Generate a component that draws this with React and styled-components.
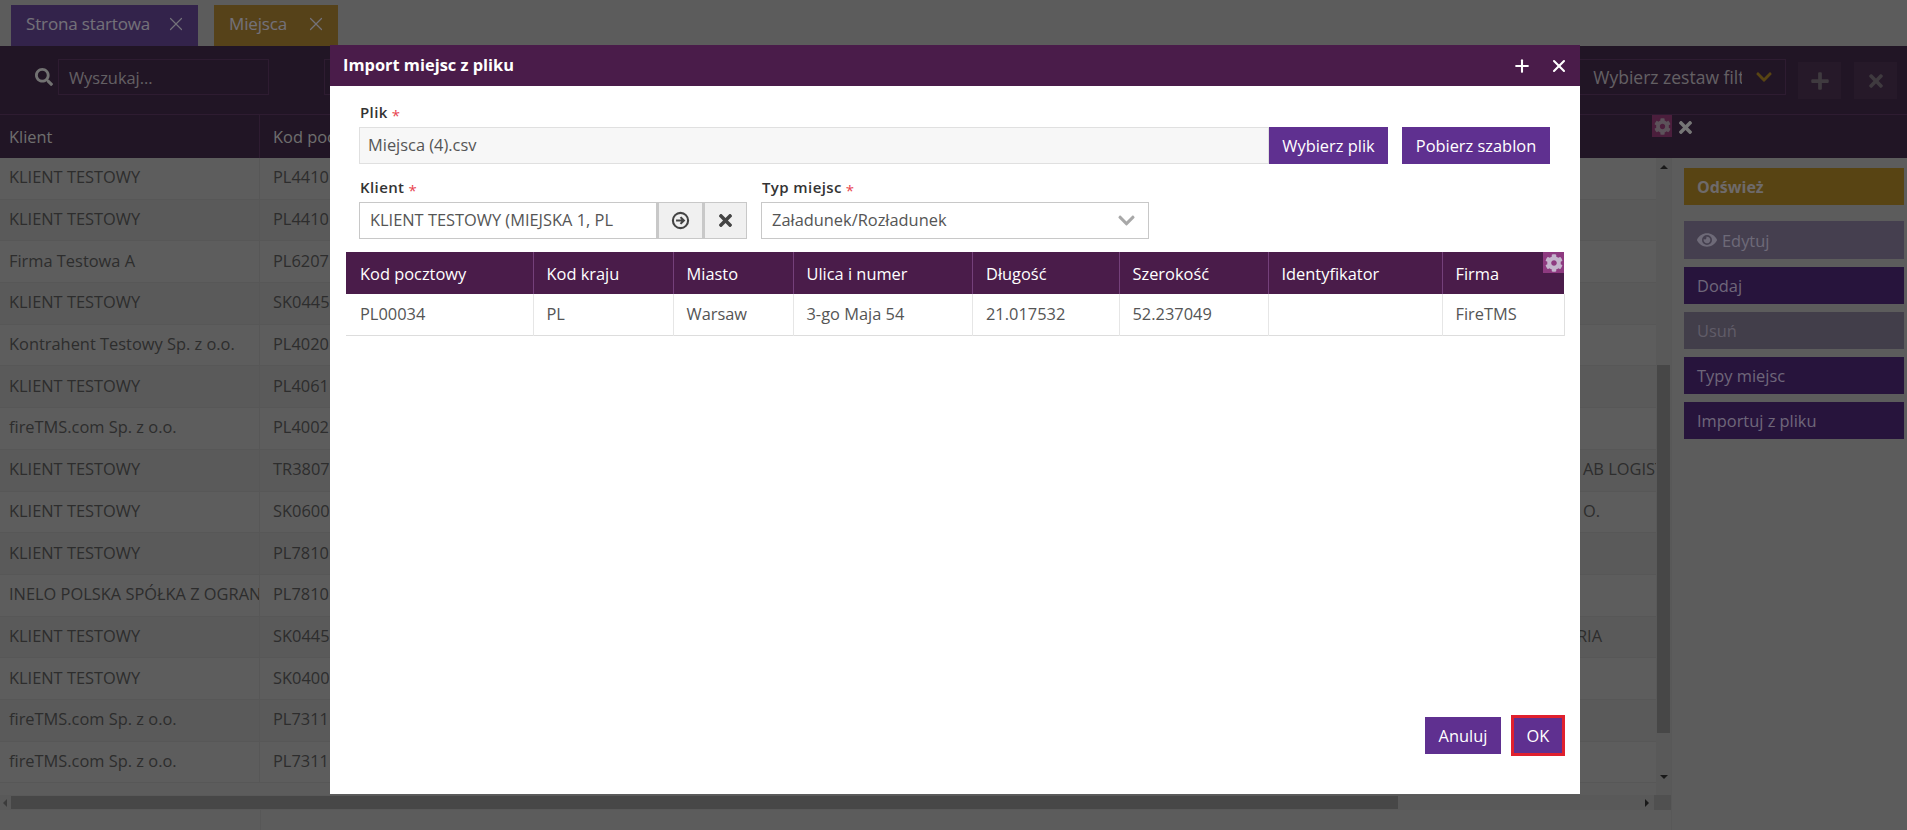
import React from 'react';
import styled, { createGlobalStyle } from 'styled-components';
import { FaSearch, FaTimes, FaPlus, FaCog, FaEye, FaChevronDown } from 'react-icons/fa';
import { X, Plus } from 'lucide-react';

const colors = {
  plum: '#4a1c4a',
  purple: '#5f3090',
  red: '#e0202e',
  line: '#c8c8c8',
};

const GlobalStyle = createGlobalStyle`
  html, body {
    margin: 0;
    padding: 0;
    background: #bcbcbc;
  }
  * {
    box-sizing: border-box;
  }
  body {
    font-family: "Open Sans", "Noto Sans", sans-serif;
    font-size: 16.4px;
  }
`;

// Page behind the dialog

const Page = styled.div`
  position: relative;
  width: 1907px;
  height: 830px;
  overflow: hidden;
  display: flex;
  flex-direction: column;
  background: #b8b8b8;
`;

const TabBar = styled.div`
  display: flex;
  gap: 16px;
  height: 46px;
  padding: 5px 0 0 11px;
`;

const Tab = styled.div`
  display: flex;
  align-items: center;
  justify-content: space-between;
  width: ${p => p.$width}px;
  padding: 0 11px 4px 15px;
  background: ${p => p.$bg};
  color: #e6e2f2;
  font-size: 17px;
  letter-spacing: -0.15px;

  svg {
    width: 22px;
    height: 22px;
    stroke-width: 1.3;
  }
`;

const Toolbar = styled.div`
  display: flex;
  align-items: flex-start;
  height: 69px;
  padding: 13px 10px 0 35px;
  background: #432a4a;
  border-bottom: 1px solid #5c3862;
`;

const SearchIcon = styled(FaSearch)`
  width: 18px;
  height: 18px;
  margin: 9px 5px 0 0;
  color: #e4e4e4;
`;

const ToolbarInput = styled.div`
  display: flex;
  align-items: center;
  justify-content: space-between;
  width: ${p => p.$width}px;
  height: 36px;
  margin-left: ${p => p.$before || 0}px;
  margin-right: ${p => p.$gap || 0}px;
  padding: 0 12px 0 10px;
  border: 1px solid #5c3862;
  color: #c8c0c8;
  overflow: hidden;
  white-space: nowrap;
`;

const FilterSelect = styled(ToolbarInput)`
  padding-left: 13px;

  svg {
    flex: none;
    width: 18px;
    height: 18px;
    margin-left: 13px;
    color: #b08826;
  }
`;

const FilterText = styled.span`
  flex: 1;
  overflow: hidden;
  font-size: 17.5px;
`;

const ToolButton = styled.div`
  display: flex;
  align-items: center;
  justify-content: center;
  width: 43px;
  height: 37px;
  margin-top: 3px;
  margin-left: ${p => p.$gap}px;
  background: #4c3252;
  color: #7e747e;
  font-size: 20px;
`;

const TableHead = styled.div`
  display: flex;
  height: 43px;
  background: #432a4a;
  color: #dcdcdc;
`;

const HeadCell = styled.div`
  width: ${p => p.$width}px;
  padding: 10px 0 0 ${p => p.$pad}px;
  border-right: 1px solid #5c3862;
`;

const HeadTools = styled.div`
  display: flex;
  align-items: flex-start;
  margin-left: 1132px;
`;

const HeadGear = styled.div`
  display: flex;
  align-items: center;
  justify-content: center;
  width: 20px;
  height: 22px;
  background: #963c78;
  color: #b8a4b4;
  font-size: 17px;
`;

const HeadClose = styled(FaTimes)`
  width: 17px;
  height: 19px;
  margin: 3px 0 0 5px;
  color: #ececec;
`;

const Content = styled.div`
  flex: 1;
  display: flex;
  min-height: 0;
`;

const ListArea = styled.div`
  width: 1672px;
  display: flex;
  flex-direction: column;
  border-right: 1px solid #b0b0b0;
`;

const ListScroll = styled.div`
  height: 637px;
  display: flex;
`;

const Rows = styled.div`
  flex: 1;
  overflow: hidden;
`;

const Row = styled.div`
  display: grid;
  grid-template-columns: 260px 1300px 97px;
  align-items: center;
  height: 41.7px;
  background: ${p => (p.$odd ? '#b5b5b5' : '#bbbbbb')};
  border-bottom: 1px solid #aeaeae;
  color: #5a5a5a;
`;

const Cell = styled.div`
  height: 100%;
  display: flex;
  align-items: center;
  padding: 0 0 3px ${p => p.$pad}px;
  border-right: 1px solid #aeaeae;
  overflow: hidden;
  white-space: nowrap;
`;

const LastCell = styled(Cell)`
  border-right: 0;
  padding-left: ${p => p.$pad || 0}px;
`;

const VScroll = styled.div`
  width: 15px;
  display: flex;
  flex-direction: column;
  align-items: center;
  background: #b2b2b2;
`;

const Arrow = styled.div`
  width: 0;
  height: 0;
  margin: ${p => p.$margin};
  border-left: 4px solid transparent;
  border-right: 4px solid transparent;
  border-${p => (p.$up ? 'bottom' : 'top')}: 4px solid #333;
`;

const VThumb = styled.div`
  width: 13px;
  height: 368px;
  margin-top: 196px;
  background: #8e8e8e;
`;

const HScroll = styled.div`
  display: flex;
  align-items: center;
  height: 15px;
  background: #b2b2b2;
`;

const HArrow = styled.div`
  width: 0;
  height: 0;
  margin: ${p => p.$margin};
  border-top: 4px solid transparent;
  border-bottom: 4px solid transparent;
  border-${p => (p.$left ? 'right' : 'left')}: 4px solid ${p => (p.$left ? '#777' : '#333')};
`;

const HThumb = styled.div`
  width: 1387px;
  height: 13px;
  background: #8e8e8e;
`;

const HCorner = styled.div`
  width: 17px;
  height: 15px;
  margin-left: auto;
  background: #a0a0a0;
`;

const ListFooter = styled.div`
  flex: 1;
  width: 261px;
  border-right: 1px solid #aeaeae;
`;

const SidePanel = styled.div`
  flex: 1;
  display: flex;
  flex-direction: column;
  gap: 8px;
  padding: 10px 3px 0 12px;
`;

const SideButton = styled.div`
  display: flex;
  align-items: center;
  gap: 5px;
  height: ${p => p.$height || 37}px;
  margin-bottom: ${p => p.$after || 0}px;
  padding-left: 13px;
  background: ${p => p.$bg};
  color: ${p => p.$color};
  font-weight: ${p => (p.$bold ? 700 : 400)};
  font-size: ${p => (p.$bold ? 16 : 16.4)}px;

  svg {
    width: 20px;
    height: 20px;
  }
`;

const Backdrop = styled.div`
  position: absolute;
  inset: 0;
  background: rgba(0, 0, 0, 0.5);
`;

// Dialog

const Dialog = styled.div`
  position: absolute;
  left: 330px;
  top: 45px;
  width: 1250px;
  height: 749px;
  display: flex;
  flex-direction: column;
  background: #fff;
`;

const DialogHeader = styled.div`
  display: flex;
  align-items: center;
  height: 41px;
  padding: 0 11px 0 13px;
  background: ${colors.plum};
  color: #fff;
  font-weight: 700;
  font-size: 16.4px;
`;

const DialogTitle = styled.div`
  flex: 1;
  padding-bottom: 2px;
`;

const HeaderIcon = styled.div`
  display: flex;
  margin-left: 17px;

  svg {
    width: 20px;
    height: 20px;
    stroke-width: 2.5;
  }
`;

const DialogBody = styled.div`
  flex: 1;
  display: flex;
  flex-direction: column;
  padding: 18px 16px 38px;
`;

const FormRow = styled.div`
  display: flex;
  align-items: flex-end;
  gap: 14px;
  padding: 0 14px 0 13px;
  margin-bottom: ${p => p.$after}px;
`;

const Field = styled.div`
  width: ${p => (p.$width ? `${p.$width}px` : 'auto')};
  flex: ${p => (p.$width ? 'none' : 1)};
`;

const Label = styled.div`
  height: 23px;
  padding-left: 1px;
  color: #333;
  font-weight: 600;
  font-size: 15px;
  letter-spacing: 0.4px;
  line-height: 17px;
`;

const Required = styled.span`
  margin-left: 4px;
  color: #e8434f;
  font-weight: 400;
  font-size: 15px;
  vertical-align: -3px;
`;

const InputGroup = styled.div`
  display: flex;
  height: 37px;
`;

const TextBox = styled.div`
  flex: 1;
  display: flex;
  align-items: center;
  padding: 0 8px 2px ${p => p.$pad}px;
  background: ${p => (p.$readOnly ? '#f7f7f7' : '#fff')};
  border: 1px solid ${p => (p.$readOnly ? '#e0e0e0' : colors.line)};
  color: #555;
  white-space: nowrap;
  overflow: hidden;
`;

const AddonButton = styled.div`
  display: flex;
  align-items: center;
  justify-content: center;
  width: ${p => p.$width}px;
  background: #f0f0f0;
  border: 1px solid ${colors.line};
  border-left: 2px solid ${colors.line};
  color: #444;

  > svg {
    width: 19px;
    height: 19px;
  }
`;

const SelectBox = styled(TextBox)`
  justify-content: space-between;
  height: 37px;
  padding-right: 12px;

  svg {
    color: #a8a8a8;
    width: 19px;
    height: 19px;
    margin-top: 2px;
  }
`;

const Button = styled.div`
  display: flex;
  align-items: center;
  justify-content: center;
  width: ${p => p.$width}px;
  height: 37px;
  background: ${colors.purple};
  color: #fff;
`;

const OkButton = styled(Button)`
  height: 41px;
  border: 3px solid ${colors.red};
`;

const GridWrap = styled.div`
  position: relative;
`;

const Table = styled.table`
  width: 1218px;
  table-layout: fixed;
  border-collapse: collapse;
  border-bottom: 1px solid #ddd;

  th {
    height: 42px;
    padding: 0 0 0 13px;
    background: ${colors.plum};
    border-right: 1px solid #74407a;
    color: #fff;
    font-weight: 400;
    text-align: left;
  }

  th:first-child, td:first-child {
    padding-left: 14px;
  }

  th:last-child {
    border-right: 0;
  }

  td {
    height: 41px;
    padding: 0 0 2px 13px;
    border-right: 1px solid #e6e6e6;
    color: #555;
  }

  td:last-child {
    border-right: 1px solid #e0e0e0;
  }
`;

const GearBadge = styled.div`
  position: absolute;
  top: 0;
  right: 0;
  width: 21px;
  height: 21px;
  display: flex;
  align-items: center;
  justify-content: center;
  background: #8e3a80;
  color: #c4b4cc;
  font-size: 18px;
`;

const DialogFooter = styled.div`
  margin: auto -1px 0 0;
  display: flex;
  justify-content: flex-end;
  align-items: center;
  gap: 10px;
`;

const rows = [
  ['KLIENT TESTOWY', 'PL4410'],
  ['KLIENT TESTOWY', 'PL4410'],
  ['Firma Testowa A', 'PL6207'],
  ['KLIENT TESTOWY', 'SK0445'],
  ['Kontrahent Testowy Sp. z o.o.', 'PL4020'],
  ['KLIENT TESTOWY', 'PL4061'],
  ['fireTMS.com Sp. z o.o.', 'PL4002'],
  ['KLIENT TESTOWY', 'TR3807', 'AB LOGISTICS', 23],
  ['KLIENT TESTOWY', 'SK0600', 'O.', 23],
  ['KLIENT TESTOWY', 'PL7810'],
  ['INELO POLSKA SPÓŁKA Z OGRANICZONĄ', 'PL7810'],
  ['KLIENT TESTOWY', 'SK0445', 'RIA', 17],
  ['KLIENT TESTOWY', 'SK0400'],
  ['fireTMS.com Sp. z o.o.', 'PL7311'],
  ['fireTMS.com Sp. z o.o.', 'PL7311'],
];

const columns = [
  ['Kod pocztowy', 187, 'PL00034'],
  ['Kod kraju', 140, 'PL'],
  ['Miasto', 120, 'Warsaw'],
  ['Ulica i numer', 179.5, '3-go Maja 54'],
  ['Długość', 146.5, '21.017532'],
  ['Szerokość', 149, '52.237049'],
  ['Identyfikator', 174, ''],
  ['Firma', 122, 'FireTMS'],
];

const CircleArrow = () => (
  <svg viewBox="0 0 18 18" fill="none" stroke="currentColor">
    <circle cx="9" cy="9" r="7.2" strokeWidth="2" />
    <path d="M4.8 9h7M9 5.8 12.2 9 9 12.2" strokeWidth="2" />
  </svg>
);

const App = () => (
  <Page>
    <GlobalStyle />
    <TabBar>
      <Tab $width={187} $bg="#664796">Strona startowa <X /></Tab>
      <Tab $width={124} $bg="#ac8433">Miejsca <X /></Tab>
    </TabBar>
    <Toolbar>
      <SearchIcon />
      <ToolbarInput $width={211} $gap={55}>Wyszukaj...</ToolbarInput>
      <ToolbarInput $width={463} />
      <FilterSelect $width={207} $before={793}>
        <FilterText>Wybierz zestaw filtrów</FilterText>
        <FaChevronDown />
      </FilterSelect>
      <ToolButton $gap={12}><FaPlus /></ToolButton>
      <ToolButton $gap={13}><FaTimes /></ToolButton>
    </Toolbar>
    <TableHead>
      <HeadCell $width={260} $pad={9}>Klient</HeadCell>
      <HeadCell $width={260} $pad={13}>Kod pocztowy</HeadCell>
      <HeadTools>
        <HeadGear><FaCog /></HeadGear>
        <HeadClose />
      </HeadTools>
    </TableHead>
    <Content>
      <ListArea>
        <ListScroll>
          <Rows>
            {rows.map((row, i) => (
              <Row key={i} $odd={i % 2 === 1}>
                <Cell $pad={9}>{row[0]}</Cell>
                <Cell $pad={13}>{row[1]}</Cell>
                <LastCell $pad={row[3]}>{row[2]}</LastCell>
              </Row>
            ))}
          </Rows>
          <VScroll>
            <Arrow $up $margin="7px 0 0" />
            <VThumb />
            <Arrow $margin="42px 0 0" />
          </VScroll>
        </ListScroll>
        <HScroll>
          <HArrow $left $margin="0 4px 0 3px" />
          <HThumb />
          <HArrow $margin="0 0 0 247px" />
          <HCorner />
        </HScroll>
        <ListFooter />
      </ListArea>
      <SidePanel>
        <SideButton $bg="#b08826" $color="#dcd4d4" $bold $after={8}>Odśwież</SideButton>
        <SideButton $bg="#8a7f9e" $color="#dcd4f0" $height={38}><FaEye /> Edytuj</SideButton>
        <SideButton $bg="#4e2878" $color="#ddccf2">Dodaj</SideButton>
        <SideButton $bg="#847c94" $color="#c0b8d0">Usuń</SideButton>
        <SideButton $bg="#4e2878" $color="#ddccf2">Typy miejsc</SideButton>
        <SideButton $bg="#4e2878" $color="#ddccf2">Importuj z pliku</SideButton>
      </SidePanel>
    </Content>
    <Backdrop />
    <Dialog>
      <DialogHeader>
        <DialogTitle>Import miejsc z pliku</DialogTitle>
        <HeaderIcon><Plus /></HeaderIcon>
        <HeaderIcon><X /></HeaderIcon>
      </DialogHeader>
      <DialogBody>
        <FormRow $after={15}>
          <Field>
            <Label>Plik<Required>*</Required></Label>
            <InputGroup>
              <TextBox $readOnly $pad={8}>Miejsca (4).csv</TextBox>
              <Button $width={119}>Wybierz plik</Button>
            </InputGroup>
          </Field>
          <Button $width={148}>Pobierz szablon</Button>
        </FormRow>
        <FormRow $after={13}>
          <Field $width={388}>
            <Label>Klient<Required>*</Required></Label>
            <InputGroup>
              <TextBox $pad={10}>KLIENT TESTOWY (MIEJSKA 1, PL</TextBox>
              <AddonButton $width={46}><CircleArrow /></AddonButton>
              <AddonButton $width={44}><FaTimes /></AddonButton>
            </InputGroup>
          </Field>
          <Field $width={388}>
            <Label>Typ miejsc<Required>*</Required></Label>
            <SelectBox $pad={10}>
              Załadunek/Rozładunek
              <FaChevronDown />
            </SelectBox>
          </Field>
        </FormRow>
        <GridWrap>
          <Table>
            <colgroup>
              {columns.map(col => <col key={col[0]} style={{ width: col[1] }} />)}
            </colgroup>
            <thead>
              <tr>{columns.map(col => <th key={col[0]}>{col[0]}</th>)}</tr>
            </thead>
            <tbody>
              <tr>{columns.map(col => <td key={col[0]}>{col[2]}</td>)}</tr>
            </tbody>
          </Table>
          <GearBadge><FaCog /></GearBadge>
        </GridWrap>
        <DialogFooter>
          <Button $width={76}>Anuluj</Button>
          <OkButton $width={54}>OK</OkButton>
        </DialogFooter>
      </DialogBody>
    </Dialog>
  </Page>
);

export default App;
